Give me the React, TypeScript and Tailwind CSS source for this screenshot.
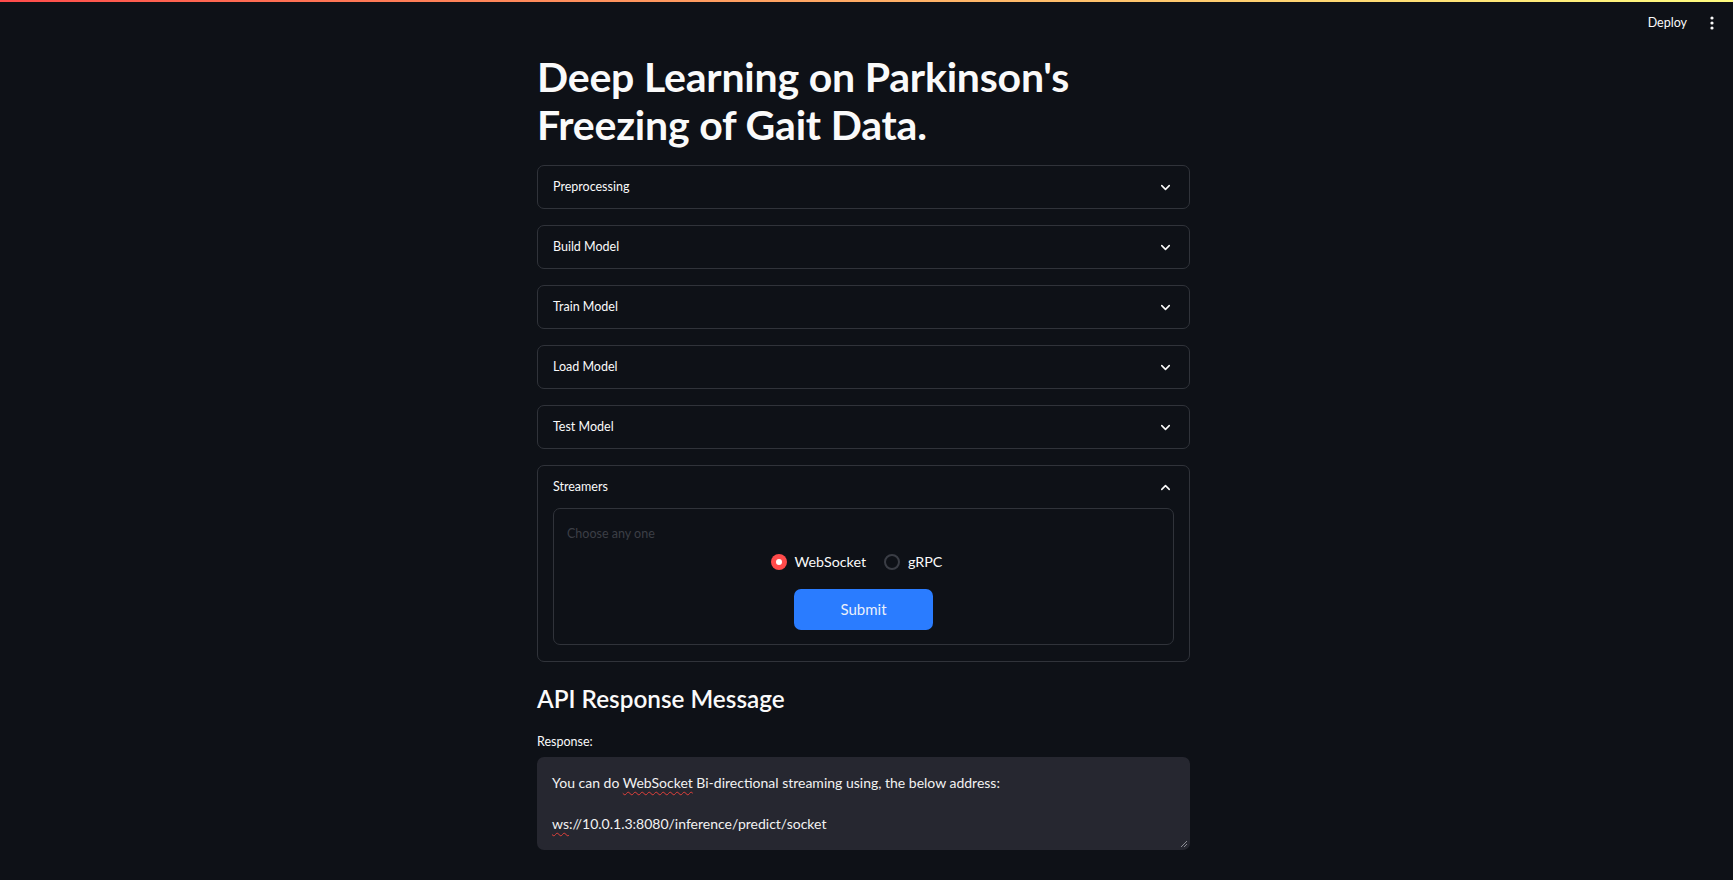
import { ChevronDown, ChevronUp } from 'lucide-react';

const sections = ['Preprocessing', 'Build Model', 'Train Model', 'Load Model', 'Test Model'];

function Radio({ label, checked }: { label: string; checked?: boolean }) {
  return (
    <label className="flex items-center gap-[8px] cursor-pointer">
      {checked ? (
        <span className="w-[16px] h-[16px] rounded-full bg-[#ff4b4b] flex items-center justify-center">
          <span className="w-[6px] h-[6px] rounded-full bg-white" />
        </span>
      ) : (
        <span className="w-[16px] h-[16px] rounded-full border-2 border-[#3a3d45] bg-[#0e1117]" />
      )}
      <span className="text-[14.3px] leading-[22px] text-[#fafafa]">{label}</span>
    </label>
  );
}

export default function App() {
  return (
    <div
      className="min-h-[880px] w-full bg-[#0e1117] text-[#fafafa]"
      style={{ fontFamily: "Lato, 'Noto Sans', sans-serif" }}
    >
      {/* decoration bar */}
      <div className="h-[2px] w-full bg-gradient-to-r from-[#ff4b4b] to-[#fffd80]" />

      {/* header */}
      <div className="h-[42px] flex items-center justify-end pr-[19px] gap-[23px]">
        <span className="text-[12.5px] text-[#fafafa]">Deploy</span>
        <svg width="4" height="14" viewBox="0 0 4 14" className="fill-[#fafafa]">
          <circle cx="2" cy="2" r="1.6" />
          <circle cx="2" cy="7" r="1.6" />
          <circle cx="2" cy="12" r="1.6" />
        </svg>
      </div>

      <div className="flex justify-center pr-[6px] pt-[9px]">
        <div className="w-[653px] flex flex-col">
          <h1 className="text-[41px] leading-[48px] font-bold tracking-[-0.2px]">
            Deep Learning on Parkinson's
            <br />
            Freezing of Gait Data.
          </h1>

          {/* expanders */}
          <div className="mt-[16px] flex flex-col gap-[16px]">
            {sections.map((s) => (
              <div key={s} className="border border-[#30333a] rounded-[7px]">
                <div className="h-[42px] flex items-center justify-between pl-[15px] pr-[16px]">
                  <span className="text-[12.5px] text-[#fafafa]">{s}</span>
                  <ChevronDown size={15} strokeWidth={2.5} className="text-[#fafafa]" />
                </div>
              </div>
            ))}

            <div className="border border-[#30333a] rounded-[7px]">
              <div className="h-[42px] flex items-center justify-between pl-[15px] pr-[16px]">
                <span className="text-[12.5px] text-[#fafafa]">Streamers</span>
                <ChevronUp size={15} strokeWidth={2.5} className="text-[#fafafa]" />
              </div>
              <div className="mx-[15px] mb-[16px] border border-[#30333a] rounded-[7px] px-[13px] pt-[15px] pb-[14px]">
                <div className="text-[12.5px] leading-[20px] text-[#3c3f46]">Choose any one</div>
                <div className="mt-[7px] h-[22px] flex justify-center items-center gap-[18px] pr-[14px]">
                  <Radio label="WebSocket" checked />
                  <Radio label="gRPC" />
                </div>
                <div className="mt-[16px] flex justify-center">
                  <button className="w-[139px] h-[41px] rounded-[7px] bg-[#2a7cff] text-[15px] text-[#e9effb]">
                    Submit
                  </button>
                </div>
              </div>
            </div>
          </div>

          {/* API response */}
          <h3 className="mt-[20px] text-[24.3px] leading-[34px] font-semibold">API Response Message</h3>
          <div className="mt-[17px] text-[12.5px] leading-[18px] text-[#fafafa]">Response:</div>
          <div className="relative mt-[6px] h-[93px] rounded-[7px] bg-[#262730] px-[15px] pt-[16px] text-[14px] leading-[20.5px] text-[#f2f2f2]">
            <div>
              You can do{' '}
              <span className="underline decoration-wavy decoration-[#e0403a] decoration-1 underline-offset-[3px]">
                WebSocket
              </span>{' '}
              Bi-directional streaming using, the below address:
            </div>
            <div>&nbsp;</div>
            <div>
              <span className="underline decoration-wavy decoration-[#e0403a] decoration-1 underline-offset-[3px]">
                ws
              </span>
              ://10.0.1.3:8080/inference/predict/socket
            </div>
            <svg
              width="8"
              height="8"
              viewBox="0 0 8 8"
              className="absolute right-[2px] bottom-[2px] stroke-[#8a8c93]"
            >
              <line x1="7" y1="1" x2="1" y2="7" strokeWidth="1" />
              <line x1="7" y1="4" x2="4" y2="7" strokeWidth="1" />
            </svg>
          </div>
        </div>
      </div>
    </div>
  );
}
